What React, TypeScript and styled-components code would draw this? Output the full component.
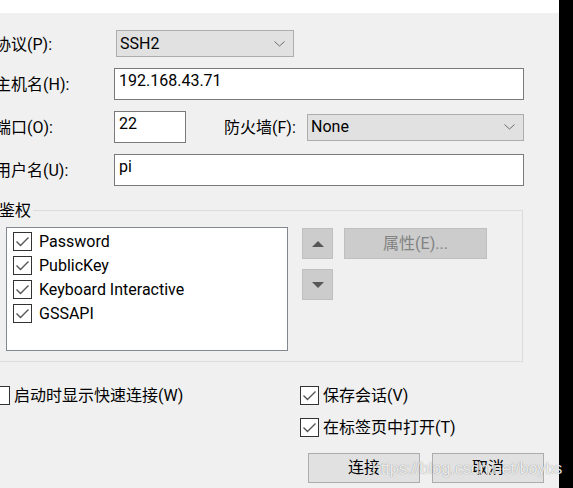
import React from 'react';
import styled, { createGlobalStyle } from 'styled-components';

const GlobalStyle = createGlobalStyle`
  html, body {
    margin: 0;
    padding: 0;
    background: #f0f0f0;
  }
  body {
    font-family: Roboto, "Noto Sans CJK SC", sans-serif;
  }
`;

const Check: React.FC<{ checked?: boolean }> = ({ checked }) => (
  <CheckBox>
    {checked && (
      <svg width="17" height="17" viewBox="0 0 17 17">
        <polyline points="2.5,8.5 6.5,12.5 14.5,4.5" fill="none" stroke="#555" strokeWidth="1.4" />
      </svg>
    )}
  </CheckBox>
);

const Chevron = () => (
  <svg width="11" height="6" viewBox="0 0 11 6">
    <polyline points="0.5,0.5 5.5,5 10.5,0.5" fill="none" stroke="#6b6b6b" strokeWidth="1" />
  </svg>
);

const App: React.FC = () => {
  const methods = ['Password', 'PublicKey', 'Keyboard Interactive', 'GSSAPI'];
  return (
    <Window>
      <GlobalStyle />
      <Dialog>
        <TopBand />
        <Body>
          <FormGrid>
            <Label>协议(P):</Label>
            <Combo width={178} shift={2}>
              <span>SSH2</span>
              <Chevron />
            </Combo>

            <Label>主机名(H):</Label>
            <TextField>192.168.43.71</TextField>

            <Label>端口(O):</Label>
            <PortRow>
              <TextField width={72}>22</TextField>
              <FirewallLabel>防火墙(F):</FirewallLabel>
              <Combo width={217} shift={0}>
                <span>None</span>
                <Chevron />
              </Combo>
            </PortRow>

            <Label>用户名(U):</Label>
            <TextField>pi</TextField>
          </FormGrid>

          <Group>
            <GroupHead>
              <GroupTitle>鉴权</GroupTitle>
              <GroupRule />
            </GroupHead>
            <GroupInner>
              <MethodList>
                {methods.map((m) => (
                  <MethodRow key={m}>
                    <Check checked />
                    <span>{m}</span>
                  </MethodRow>
                ))}
              </MethodList>
              <ArrowColumn>
                <ArrowButton>
                  <Triangle up />
                </ArrowButton>
                <ArrowButton>
                  <Triangle />
                </ArrowButton>
              </ArrowColumn>
              <PropsButton>属性(E)...</PropsButton>
            </GroupInner>
          </Group>

          <Options>
            <LeftOption>
              <OptionRow>
                <Check />
                <span>启动时显示快速连接(W)</span>
              </OptionRow>
            </LeftOption>
            <RightOptions>
              <OptionRow>
                <Check checked />
                <span>保存会话(V)</span>
              </OptionRow>
              <OptionRow>
                <Check checked />
                <span>在标签页中打开(T)</span>
              </OptionRow>
            </RightOptions>
          </Options>

          <ButtonRow>
            <PushButton>连接</PushButton>
            <PushButton>取消</PushButton>
          </ButtonRow>
        </Body>
      </Dialog>
      <Edge />
      <Watermark>https://blog.csdn.net/boybs</Watermark>
    </Window>
  );
};
export default App;

const Window = styled.div`
  position: relative;
  width: 573px;
  height: 488px;
  display: flex;
  overflow: hidden;
`;
const Dialog = styled.div`
  width: 559px;
  display: flex;
  flex-direction: column;
  overflow: hidden;
`;
const TopBand = styled.div`
  height: 13px;
  background: #ffffff;
  flex-shrink: 0;
`;
const Body = styled.div`
  flex: 1;
  background: #f0f0f0;
  padding-top: 17px;
  font-size: 16px;
  color: #000;
`;
const Edge = styled.div`
  width: 14px;
  background: #000;
`;
const FormGrid = styled.div`
  display: grid;
  grid-template-columns: 119px 410px;
  row-gap: 11px;
  margin-left: -5px;
  align-items: center;
`;
const Label = styled.div`
  white-space: nowrap;
  line-height: 20px;
  padding-top: 2px;
`;
const Combo = styled.div<{ width: number; shift: number }>`
  box-sizing: border-box;
  width: ${(p) => p.width}px;
  height: 27px;
  margin-left: ${(p) => p.shift}px;
  background: #e1e1e1;
  border: 1px solid #adadad;
  display: flex;
  align-items: center;
  justify-content: space-between;
  padding: 0 8px 0 3px;
  line-height: 20px;
`;
const TextField = styled.div<{ width?: number }>`
  box-sizing: border-box;
  width: ${(p) => (p.width ? `${p.width}px` : '100%')};
  height: 32px;
  background: #fff;
  border: 1px solid #7a7a7a;
  padding: 2px 4px;
  line-height: 20px;
`;
const PortRow = styled.div`
  display: flex;
  align-items: center;
`;
const FirewallLabel = styled.div`
  margin-left: 38px;
  white-space: nowrap;
  line-height: 20px;
  padding-top: 2px;
  flex: 1;
`;
const Group = styled.div`
  margin: 14px 0 0 -4px;
  width: 527px;
`;
const GroupHead = styled.div`
  display: flex;
  align-items: center;
  height: 21px;
`;
const GroupTitle = styled.div`
  padding: 0 2px 0 3px;
  line-height: 21px;
  white-space: nowrap;
`;
const GroupRule = styled.div`
  flex: 1;
  height: 1px;
  background: #dcdcdc;
`;
const GroupInner = styled.div`
  margin-top: -11px;
  border: 1px solid #dcdcdc;
  border-top: none;
  padding: 17px 0 10px 9px;
  display: flex;
  align-items: flex-start;
`;
const MethodList = styled.div`
  box-sizing: border-box;
  width: 282px;
  height: 124px;
  background: #fff;
  border: 1px solid #828790;
  padding: 1px 6px;
`;
const MethodRow = styled.div`
  display: flex;
  align-items: center;
  height: 24px;
  gap: 7px;
  white-space: nowrap;
`;
const CheckBox = styled.div`
  box-sizing: border-box;
  width: 19px;
  height: 19px;
  border: 1px solid #333;
  background: #fff;
  flex-shrink: 0;
  display: flex;
  align-items: center;
  justify-content: center;
`;
const ArrowColumn = styled.div`
  display: flex;
  flex-direction: column;
  gap: 10px;
  margin: 1px 0 0 14px;
`;
const ArrowButton = styled.div`
  box-sizing: border-box;
  width: 31px;
  height: 31px;
  background: #cccccc;
  border: 1px solid #bfbfbf;
  display: flex;
  align-items: center;
  justify-content: center;
`;
const Triangle = styled.div<{ up?: boolean }>`
  width: 0;
  height: 0;
  border-left: 6px solid transparent;
  border-right: 6px solid transparent;
  ${(p) => (p.up ? 'border-bottom: 6px solid #575757;' : 'border-top: 6px solid #575757;')}
`;
const PropsButton = styled.div`
  box-sizing: border-box;
  width: 143px;
  height: 31px;
  margin: 1px 0 0 11px;
  background: #cccccc;
  border: 1px solid #bfbfbf;
  color: #838383;
  display: flex;
  align-items: center;
  justify-content: center;
  line-height: 20px;
`;
const Options = styled.div`
  display: flex;
  margin: 24px 0 0 -9px;
`;
const LeftOption = styled.div`
  width: 309px;
`;
const RightOptions = styled.div`
  display: flex;
  flex-direction: column;
  gap: 13px;
`;
const OptionRow = styled.div`
  display: flex;
  align-items: center;
  height: 19px;
  gap: 4px;
  white-space: nowrap;
  line-height: 20px;
`;
const ButtonRow = styled.div`
  display: flex;
  justify-content: flex-end;
  gap: 12px;
  margin-top: 16px;
  padding-right: 15px;
`;
const PushButton = styled.div`
  box-sizing: border-box;
  width: 112px;
  height: 30px;
  background: #e1e1e1;
  border: 1px solid #adadad;
  display: flex;
  align-items: center;
  justify-content: center;
  line-height: 20px;
`;
const Watermark = styled.div`
  position: absolute;
  left: 372px;
  top: 459px;
  font-family: "Liberation Sans", Arial, sans-serif;
  font-size: 16px;
  line-height: 20px;
  color: rgba(250, 250, 250, 0.9);
  text-shadow: 0 0 1px rgba(0, 0, 0, 0.45);
  white-space: nowrap;
  pointer-events: none;
`;
